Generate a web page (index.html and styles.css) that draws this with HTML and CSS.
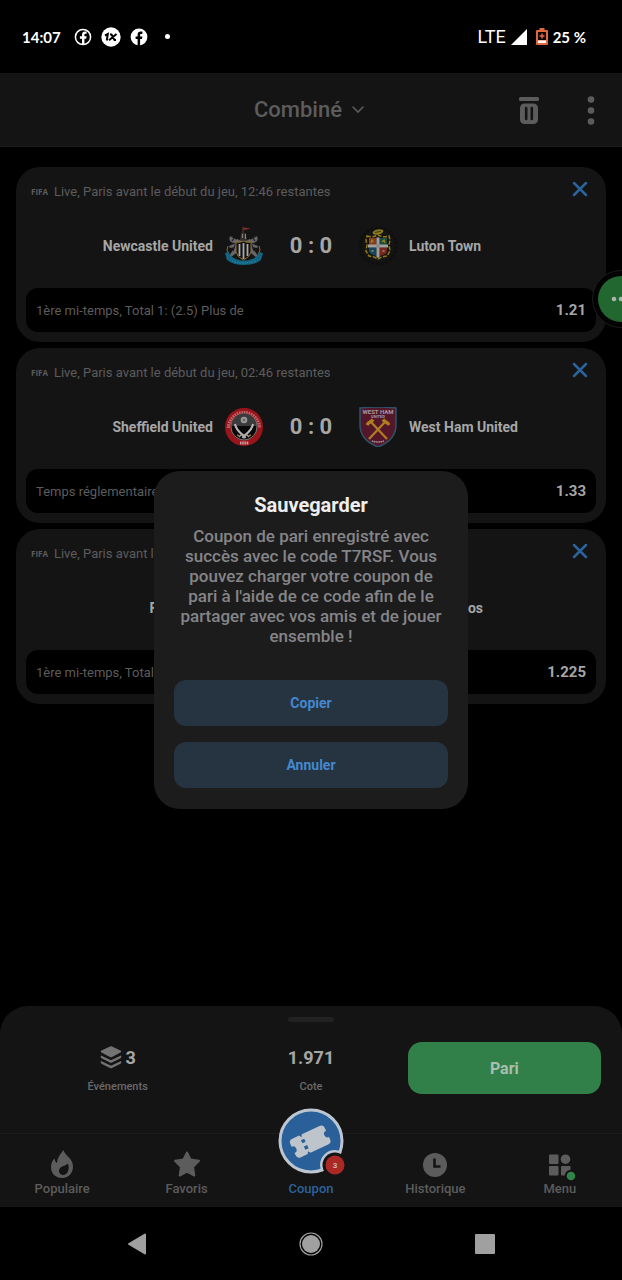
FILE: index.html
```html
<!DOCTYPE html>
<html lang="fr">
<head>
<meta charset="utf-8">
<meta name="viewport" content="width=device-width, initial-scale=1">
<title>Coupon</title>
<link rel="stylesheet" href="styles.css">
</head>
<body>
<svg class="defs" aria-hidden="true">
  <symbol id="i-close" viewBox="0 0 16 16"><path d="M2 2 14 14M14 2 2 14" fill="none" stroke="currentColor" stroke-width="2.500" stroke-linecap="round"/></symbol>
</svg>
<div class="screen">
  <div class="status">
    <div class="status-group">
      <span class="clock">14:07</span>
      <svg width="18" height="18" viewBox="0 0 18 18"><circle cx="9" cy="9" r="7.600" fill="none" stroke="#fff" stroke-width="1.500"/><path d="M8 16V10.700H5.900V8.200H8V6.800C8 4.600 9.200 3.600 11 3.600h1.600v2.200h-1.100c-.9 0-1.100.5-1.100 1.200v1.200h2.200l-.4 2.500h-1.800V16z" fill="#fff"/></svg>
      <svg width="20" height="20" viewBox="0 0 20 20"><circle cx="10" cy="10" r="9.700" fill="#fff"/><path d="M4 8.500 6.800 7 5.800 13.500M9 7.500h1.500l3 5.500H15M15.500 7 8 13.200" fill="none" stroke="#000" stroke-width="2"/></svg>
      <svg width="18" height="18" viewBox="0 0 18 18"><circle cx="9" cy="9" r="8.400" fill="#fff"/><path d="M7.600 18V11H5.600V8.400h2V6.900c0-2.200 1.200-3.300 3.100-3.300h1.700v2.300h-1.100c-.9 0-1.200.5-1.200 1.200v1.300h2.300l-.4 2.600h-1.900v7z" fill="#000"/></svg>
      <span class="dot"></span>
    </div>
    <div class="status-group status-right">
      <span class="lte">LTE</span>
      <svg width="16" height="16" viewBox="0 0 16 16"><path d="M0 16 16 0V16z" fill="#fff"/></svg>
      <svg class="battery" width="12" height="17" viewBox="0 0 12 17"><path d="M3.500 0h5v2H11a1 1 0 0 1 1 1v13a1 1 0 0 1-1 1H1a1 1 0 0 1-1-1V3a1 1 0 0 1 1-1h2.500z" fill="#e0683f"/><path d="M2 4h8v8H2z" fill="#0b0402"/><path d="M2 12.500h8V15H2z" fill="#fff"/><path d="M6 5.500v5M3.500 8h5" stroke="#e0683f" stroke-width="1.500"/></svg>
      <span class="percent">25 %</span>
    </div>
  </div>

  <header class="topbar">
    <button class="type" type="button">Combiné
      <svg width="14" height="8" viewBox="0 0 14 8"><path d="M2 1 7 6 12 1" fill="none" stroke="currentColor" stroke-width="1.600" stroke-linecap="round"/></svg>
    </button>
    <div class="tools">
      <button type="button" aria-label="Supprimer"><svg width="20" height="28" viewBox="0 0 20 28"><rect x="0" y="1" width="20" height="4" rx="1.500" fill="currentColor"/><rect x="1" y="7.500" width="18" height="20.500" rx="4.500" fill="currentColor"/><path d="M7.200 12V23M12.800 12V23" stroke="#141414" stroke-width="2.600" stroke-linecap="round"/></svg></button>
      <button type="button" aria-label="Options"><svg width="8" height="30" viewBox="0 0 8 30"><g fill="currentColor"><circle cx="4" cy="4.500" r="3.300"/><circle cx="4" cy="15.500" r="3.300"/><circle cx="4" cy="26.500" r="3.300"/></g></svg></button>
    </div>
  </header>

  <main class="bets">
    <article class="bet">
      <div class="bet-head"><span class="fifa">FIFA</span><span>Live, Paris avant le début du jeu, 12:46 restantes</span><button class="close" type="button" aria-label="Retirer"><svg width="16" height="16"><use href="#i-close"/></svg></button></div>
      <div class="match">
        <span class="team home">Newcastle United</span>
        <svg class="crest" viewBox="0 0 40 40">
          <path d="M19 1v7" stroke="#6b3a34"/><path d="M19 1.500l8 1-7 1.500z" fill="#8c2f2a"/>
          <path d="M16.500 12 17 7h5l.5 5 1.500 3h-9z" fill="#33312e"/><path d="M18 8h1v4h-1zM21 8h1v5h-1z" fill="#8a8679"/>
          <path d="M11 13C7 7 4 11 6 15l4 3-5 2 1 2 5-1-6 9-3 3 4-1 10-8 2-9zM28 13c4-6 7-2 5 2l-4 3 5 2-1 2-5-1 6 9 3 3-4-1-10-8-2-9z" fill="#66666a"/>
          <path d="M7 10l3 2-2 3M32 10l-3 2 2 3M12 17l-3 8M27 17l3 8M8 17l4 1M31 17l-4 1" fill="none" stroke="#1d1d20" stroke-width="1.200"/>
          <path d="M4 20l-1 4 2 5M35 20l1 4-2 5M14 13l-2 5M25 13l2 5" fill="none" stroke="#8f6b22" stroke-width="1"/>
          <path d="M12 16q4 1 7.500-1 3.500 2 7.500 1v10q-1 5-7.500 8Q13 31 12 26z" fill="#111" stroke="#8d732b"/>
          <path d="M15.500 18v12M19.500 17v16M23.500 18v12" stroke="#a8a8a8" stroke-width="1.800"/>
          <path d="M1 27l4-1q1 5 7 7 8 3 16 0 6-2 7-7l4 1-2 7q-6 5-17 5T3 34z" fill="#126482"/>
          <path d="M8 35q11 4 24 0" fill="none" stroke="#2b7f9a" stroke-width="1.300" stroke-dasharray="1.500 1"/>
        </svg>
        <strong class="score">0 : 0</strong>
        <svg class="crest" viewBox="0 0 40 40">
          <circle cx="20" cy="20" r="18" fill="none" stroke="#0f0f0f" stroke-width="3" stroke-dasharray="3 1.500"/>
          <ellipse cx="20" cy="6" rx="5.500" ry="2.500" fill="#8b7a1c" transform="rotate(-12 20 6)"/><path d="M17 6.500l6-1.300" stroke="#3d3810"/>
          <path d="M9 10q5 2 11-1 6 3 11 1l1 4-1 5 1 6-3 5-5 1-4 2-4-2-5-1-3-5 1-6-1-5z" fill="#171511" stroke="#8f7816" stroke-width="1.500" stroke-dasharray="4 1.500"/>
          <path d="M11 12h7.500v7H11z" fill="#843a1d"/><path d="M21.500 12H29v7h-7.500z" fill="#184b3e"/><path d="M11 21.500h7.500V30q-5-1-7.500-4z" fill="#14475e"/><path d="M21.500 21.500H29V26q-2 3-7.500 4z" fill="#772720"/>
          <path d="M18.500 11.500h3v7H30v3h-8.500V31L20 32l-1.500-1v-9.500H10v-3h8.500z" fill="#a09f9d"/><circle cx="20" cy="20" r="2" fill="#8d8a86"/>
          <path d="M13 17l1-3 1.500 2M24 16l2-2 1 3" fill="none" stroke="#9b8820" stroke-width="1.200"/><path d="M13.500 25h2M24.500 25h2" stroke="#9b8c6b" stroke-width="1.400"/>
        </svg>
        <span class="team">Luton Town</span>
      </div>
      <div class="outcome"><span>1ère mi-temps, Total 1: (2.5) Plus de</span><strong>1.21</strong></div>
    </article>

    <article class="bet">
      <div class="bet-head"><span class="fifa">FIFA</span><span>Live, Paris avant le début du jeu, 02:46 restantes</span><button class="close" type="button" aria-label="Retirer"><svg width="16" height="16"><use href="#i-close"/></svg></button></div>
      <div class="match">
        <span class="team home">Sheffield United</span>
        <svg class="crest" viewBox="0 0 40 40">
          <circle cx="20" cy="20" r="19" fill="#9a141b"/><path d="M4.500 21a15.500 15.500 0 0 1 31 0" fill="none" stroke="#b8696d" stroke-width="3.200" stroke-dasharray="1.600 .8"/>
          <circle cx="20" cy="20" r="13" fill="#090909" stroke="#777"/><path d="M7.500 19a12.500 12.500 0 0 1 25 0z" fill="#3b3b3b"/>
          <circle cx="20" cy="13" r="3.300" fill="#979797"/><circle cx="20" cy="13" r="1.300" fill="#666"/>
          <path d="M11 17q1 6 8 11l2.500 3M29 17q-1 6-8 11l-2.500 3" fill="none" stroke="#b8b8b8" stroke-width="2"/><path d="M15 30l2.500-2.500L20 30l2.500-2.500L25 30" fill="none" stroke="#a8a8a8" stroke-width="1.300"/><path d="M13 28l2.500 1M24.500 29l2.500-1" stroke="#94702c" stroke-width="1.500"/>
          <path d="M16 36h9" stroke="#c79fa1" stroke-width="3" stroke-dasharray="1.500 .7"/>
        </svg>
        <strong class="score">0 : 0</strong>
        <svg class="crest" viewBox="0 0 40 40">
          <path d="M2 1q18-2 36 0v17q0 15-18 22Q2 33 2 18z" fill="#54172a" stroke="#2c5468" stroke-width="1.500"/>
          <text x="20" y="7" class="crest-text">WEST HAM</text><text x="20" y="11" class="crest-text small">UNITED</text>
          <path d="M11 32 27 15M29 32 13 15" stroke="#b07e20" stroke-width="2.200"/><path d="M9 18q1-2 3-3t3-2.500M31 18q-1-2-3-3t-3-2.500" fill="none" stroke="#b07e20" stroke-width="3.200"/>
          <path d="M14 34q6 2 12 0" stroke="#a8959a" fill="none" stroke-width="1.500" stroke-dasharray="1.300 .5"/>
        </svg>
        <span class="team">West Ham United</span>
      </div>
      <div class="outcome"><span>Temps réglementaire</span><strong>1.33</strong></div>
    </article>

    <article class="bet">
      <div class="bet-head"><span class="fifa">FIFA</span><span>Live, Paris avant le</span><button class="close" type="button" aria-label="Retirer"><svg width="16" height="16"><use href="#i-close"/></svg></button></div>
      <div class="match">
        <span class="team home">Fiorentina</span>
        <span class="team away">Olympiacos</span>
      </div>
      <div class="outcome"><span>1ère mi-temps, Total</span><strong>1.225</strong></div>
    </article>
  </main>

  <section class="summary">
    <span class="grip"></span>
    <div class="totals">
      <div class="total"><strong><svg width="22" height="23" viewBox="0 0 22 23" fill="#737373"><path d="M10 .4q1-.5 2 0l8.500 4.100q1.500 1 0 2L12 11q-1 .5-2 0L1.500 6.500q-1.500-1 0-2z"/><path d="M1 9.500l9 4.300q1 .5 2 0l9-4.300q1 1.700-.5 2.700L12 16.500q-1 .5-2 0L1.500 12.200Q0 11.200 1 9.500z"/><path d="M1 15l9 4.300q1 .5 2 0l9-4.300q1 1.700-.5 2.700L12 22q-1 .5-2 0l-8.500-4.300Q0 16.700 1 15z"/></svg>3</strong><span>Événements</span></div>
      <div class="total"><strong>1.971</strong><span>Cote</span></div>
      <button class="place" type="button">Pari</button>
    </div>
  </section>

  <nav class="tabs">
    <a class="tab" href="#populaire"><svg width="28" height="28" viewBox="0 0 28 28"><path fill-rule="evenodd" d="M15.500 0c.5 5 9.500 8 9.500 16.500C25 23.500 20 28 14 28S3 24 3 17c0-4 1.500-6.500 3.500-8.500.5 2 1 3.500 2.500 4.500 0-5 3.500-9 6.500-13zm4.500 13.500c-2 2.500-9 2.500-9 7.500 0 2.200 1.700 4 4 4 4.500 0 7-5.500 5-11.500z"/></svg>Populaire</a>
    <a class="tab" href="#favoris"><svg width="28" height="28" viewBox="0 0 28 28"><path d="M14 2.500 17.500 9.500 26 10.800 20 17 21.300 25.500 14 21.500 6.700 25.500 8 17 2 10.800 10.500 9.500z" stroke="currentColor" stroke-width="2" stroke-linejoin="round"/></svg>Favoris</a>
    <a class="tab active" href="#coupon"><svg width="66" height="66" viewBox="0 0 66 66">
      <circle cx="33" cy="33" r="31" fill="#2a6099" stroke="#bdc6d0" stroke-width="3"/>
      <g transform="rotate(-25 33 33)"><path d="M17 23h7.500l1.500 2.500 1.500-2.500H47q4 0 4 4v3q-3.500 0-3.500 3.500T51 37v2.500q0 4-4 4H27.500L26 41l-1.500 2.500H17q-4 0-4-4V37q3.500 0 3.500-3.500T13 30v-3q0-4 4-4z" fill="#bdc4cc"/><path d="M26 28v3.500M26 35v3.500" stroke="#2a6099" stroke-width="3.600"/></g>
      <clipPath id="ring"><circle cx="33" cy="33" r="32.500"/></clipPath>
      <circle cx="57" cy="57" r="15" fill="#bdc6d0" clip-path="url(#ring)"/><circle cx="57" cy="57" r="12.500" fill="#141414"/><circle cx="57" cy="57" r="9.500" fill="#ab2925"/><text x="57" y="60" class="badge">3</text></svg>Coupon</a>
    <a class="tab" href="#historique"><svg width="28" height="28" viewBox="0 0 28 28"><circle cx="14" cy="15" r="12"/><path d="M13.500 8.500v8h6" fill="none" stroke="#141414" stroke-width="2.600"/></svg>Historique</a>
    <a class="tab" href="#menu"><svg width="28" height="28" viewBox="0 0 28 28"><rect x="3" y="4.500" width="9.500" height="9.500" rx="1"/><circle cx="19.500" cy="9.200" r="4.800"/><rect x="3" y="16" width="9.500" height="9.500" rx="1"/><rect x="15" y="16" width="9.500" height="9.500" rx="1"/><circle cx="25" cy="26" r="6.200" fill="#141414"/><circle cx="25" cy="26" r="4.300" fill="#318449"/></svg>Menu</a>
  </nav>

  <div class="system">
    <svg width="20" height="22" viewBox="0 0 20 22"><path d="M18 1.500V20.500L2 11z" fill="#a0a0a0" stroke="#a0a0a0" stroke-width="2" stroke-linejoin="round"/></svg>
    <svg width="24" height="24" viewBox="0 0 24 24"><circle cx="12" cy="12" r="9" fill="#a0a0a0"/><circle cx="12" cy="12" r="11" fill="none" stroke="#a0a0a0" stroke-width="1.200"/></svg>
    <svg width="20" height="20" viewBox="0 0 20 20"><rect width="20" height="20" rx="1" fill="#a0a0a0"/></svg>
  </div>

  <button class="bubble" type="button" aria-label="Discussion"><svg width="58" height="58" viewBox="0 0 58 58"><circle cx="29" cy="29" r="28.500" fill="#020202" stroke="#1b1b1b"/><circle cx="29" cy="29" r="23" fill="#22672f"/><g fill="#a8b5aa"><circle cx="22" cy="29" r="2.300"/><circle cx="29" cy="29" r="2.300"/><circle cx="36" cy="29" r="2.300"/></g></svg></button>

  <div class="overlay">
    <section class="dialog" role="dialog" aria-labelledby="dlg-title">
      <h1 id="dlg-title">Sauvegarder</h1>
      <p>Coupon de pari enregistré avec succès avec le code T7RSF. Vous pouvez charger votre coupon de pari à l'aide de ce code afin de le partager avec vos amis et de jouer ensemble !</p>
      <div class="actions"><button type="button">Copier</button><button type="button">Annuler</button></div>
    </section>
  </div>
</div>
</body>
</html>
```
FILE: styles.css
```css
:root {
  --panel: #141414;
  --line: #1c1c1c;
  --muted: #5c5c5c;
  --text: #a6a6a6;
}
* { box-sizing: border-box; }
body { margin: 0; background: #000; color: var(--text); font-family: Roboto, "Liberation Sans", sans-serif; }
button { border: 0; padding: 0; background: none; color: inherit; font: inherit; cursor: pointer; }
svg { display: block; flex: none; }
.defs { position: absolute; width: 0; height: 0; }
.screen { position: relative; display: flex; flex-direction: column; min-height: 100vh; overflow: hidden; }

.status { display: flex; justify-content: space-between; align-items: center; height: 73px; padding: 0 36px 0 22px; color: #fff; }
.status-group { display: flex; align-items: center; gap: 9px; }
.clock { margin-right: 4px; font: 700 15px Lato, Roboto, sans-serif; }
.dot { width: 5px; height: 5px; margin-left: 8px; border-radius: 50%; background: #fff; }
.status-right { gap: 5px; }
.lte { font-size: 18px; }
.battery { margin-left: 4px; }
.percent { font: 700 15px Lato, Roboto, sans-serif; }

.topbar { display: grid; grid-template-columns: 1fr auto 1fr; align-items: center; height: 74px; padding: 0 27px; background: var(--panel); border-bottom: 1px solid var(--line); color: var(--muted); }
.type { grid-column: 2; display: flex; align-items: center; gap: 9px; padding-right: 3px; font-size: 22px; font-weight: 500; }
.tools { display: flex; justify-content: flex-end; align-items: center; gap: 48px; }

.bets { flex: 1; display: flex; flex-direction: column; gap: 6px; padding: 20px 16px; }
.bet { padding: 11px 10px 10px; border-radius: 24px; background: var(--panel); }
.bet-head { display: flex; align-items: center; height: 26px; padding: 0 8px 0 5px; gap: 6px; font-size: 13px; color: var(--muted); }
.fifa { font: 700 8px "Open Sans", sans-serif; }
.close { align-self: flex-start; margin-left: auto; padding: 3px 0; color: #2b639d; }
.match { display: grid; grid-template-columns: 1fr 40px 94px 40px 1fr; align-items: center; height: 84px; padding-bottom: 1px; }
.team { padding: 0 11px; font-size: 14px; font-weight: 700; }
.home { text-align: right; }
.away { grid-column: 5; }
.crest { width: 40px; height: 40px; }
.crest-text { fill: #a8999e; font: 700 6px Roboto, sans-serif; text-anchor: middle; }
.crest-text.small { font-size: 4px; }
.score { text-align: center; font-size: 22px; }
.outcome { display: flex; align-items: center; justify-content: space-between; height: 44px; padding: 0 10px; border-radius: 12px; background: #000; font-size: 13px; color: var(--muted); }
.outcome strong { font-size: 15px; color: var(--text); }

.summary { height: 127px; padding: 11px 21px 0; border-radius: 28px 28px 0 0; background: var(--panel); }
.grip { display: block; width: 46px; height: 5px; margin: 0 auto; border-radius: 3px; background: #222; }
.totals { display: grid; grid-template-columns: 1fr 1fr 1fr; padding-top: 20px; }
.total { display: flex; flex-direction: column; align-items: center; gap: 10px; padding-top: 2px; font-size: 11px; font-weight: 500; color: #6a6a6a; }
.total strong { display: flex; align-items: center; gap: 4px; height: 26px; font-size: 18px; color: var(--text); }
.place { height: 52px; border-radius: 14px; background: #31804a; color: #a9bfae; font-size: 16px; font-weight: 700; }

.tabs { display: grid; grid-template: 100% / repeat(5, 1fr); height: 74px; padding-bottom: 10px; border-top: 1px solid var(--line); background: var(--panel); }
.tab { display: flex; flex-direction: column; align-items: center; justify-content: flex-end; gap: 3px; color: var(--muted); font-size: 13px; font-weight: 500; line-height: 16px; text-decoration: none; }
.tab svg { fill: currentColor; overflow: visible; }
.tab.active { gap: 7px; color: #2b639d; }
.badge { fill: #c7b5b3; font: 700 8px Roboto, sans-serif; text-anchor: middle; }

.system { display: grid; grid-template-columns: 1fr 1fr 1fr; place-items: center; height: 73px; padding: 0 50px; }

.bubble { position: absolute; top: 270px; right: -28px; }

.overlay { position: fixed; inset: 0; display: flex; align-items: center; justify-content: center; padding: 16px; }
.dialog { width: 314px; padding: 21px 20px; border-radius: 26px; background: #1c1c1c; text-align: center; }
.dialog h1 { margin: 0 0 8px; color: #eee; font-size: 20px; font-weight: 700; line-height: 26px; }
.dialog p { margin: 0; color: #858589; font-size: 17px; font-weight: 500; line-height: 20px; }
.actions { display: grid; gap: 16px; margin-top: 34px; }
.actions button { height: 46px; border-radius: 12px; background: #263340; color: #4488cf; font-size: 14px; font-weight: 700; }
```
